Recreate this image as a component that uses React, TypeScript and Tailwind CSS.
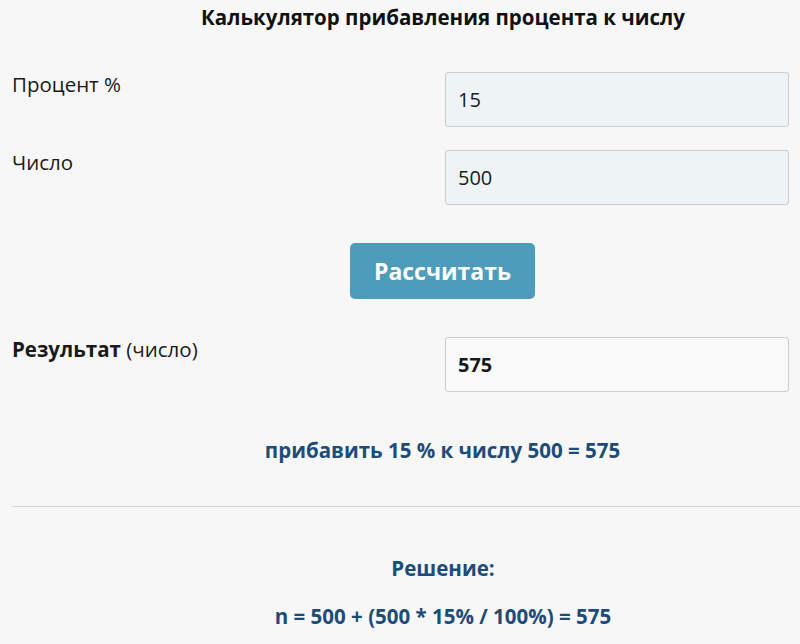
export default function App() {
  return (
    <div
      className="w-[800px] h-[644px] bg-[#f7f7f7] text-[#1a1a1a] overflow-hidden"
      style={{ fontFamily: '"Open Sans", sans-serif' }}
    >
      {/* центрированный блок смещён вправо, как в исходной вёрстке */}
      <h1 className="pl-[86px] pt-[4px] text-center text-[20.5px] font-bold leading-[26px] text-[#111]">
        Калькулятор прибавления процента к числу
      </h1>

      <div className="pl-[12px] pr-[11px]">
        <div className="mt-[42px] flex justify-between">
          <label className="text-[20.5px] leading-[24px]">Процент %</label>
          <div className="w-[344px] h-[55px] rounded-[3px] border border-[#c9cdd0] bg-[#eef4f6] flex items-center px-[12px] text-[20px]">
            15
          </div>
        </div>

        <div className="mt-[23px] flex justify-between">
          <label className="text-[20.5px] leading-[24px]">Число</label>
          <div className="w-[344px] h-[55px] rounded-[3px] border border-[#c9cdd0] bg-[#eef4f6] flex items-center px-[12px] text-[20px]">
            500
          </div>
        </div>

        <div className="mt-[38px] pl-[84px] flex justify-center">
          <button className="w-[185px] h-[56px] rounded-[5px] bg-[#4d9cbc] text-white text-[23px] font-bold">
            Рассчитать
          </button>
        </div>

        <div className="mt-[38px] flex justify-between">
          <div className="text-[20.5px] leading-[24px]">
            <span className="font-bold">Результат</span> (число)
          </div>
          <div className="w-[344px] h-[55px] rounded-[3px] border border-[#c9cdd0] bg-[#f9f9f9] flex items-center px-[12px] text-[20px] font-bold">
            575
          </div>
        </div>

        <p className="mt-[44px] pl-[84px] text-center text-[20.5px] leading-[28px] font-bold text-[#1d4c78]">
          прибавить 15 % к числу 500 = 575
        </p>
      </div>

      <hr className="ml-[12px] mt-[42px] border-t border-[#d4d4d4]" />

      <p className="mt-[47px] pl-[86px] text-center text-[20.5px] leading-[28px] font-bold text-[#1d4c78]">
        Решение:
      </p>
      <p className="mt-[20px] pl-[86px] text-center text-[20.5px] leading-[28px] font-bold text-[#1d4c78]">
        n = 500 + (500 * 15% / 100%) = 575
      </p>
    </div>
  );
}
